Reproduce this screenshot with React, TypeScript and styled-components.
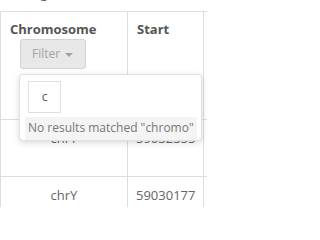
import React from "react";
import styled, { createGlobalStyle } from "styled-components";

const Global = createGlobalStyle`
  html, body { margin: 0; padding: 0; overflow: hidden; background: #fff; }
  body { font-family: "Open Sans", "Liberation Sans", sans-serif; font-size: 13px; line-height: 20px; color: #666; }
`;

const Page = styled.div`
  position: relative;
  width: 207px;
  height: 207px;
  overflow: hidden;
`;

const Info = styled.div`
  margin-top: -17px;
  margin-left: -4px;
  height: 20px;
  margin-bottom: 8px;
  white-space: nowrap;
  color: #555;
`;

const Table = styled.table`
  border-collapse: collapse;
  table-layout: fixed;
  width: 330px;
`;

const Th = styled.th<{ $w: number }>`
  width: ${(p) => p.$w}px;
  border: 1px solid #ddd;
  text-align: left;
  vertical-align: top;
  padding: 7px 9px 0 9px;
  height: 108px;
  box-sizing: border-box;
  font-weight: 700;
  color: #555;
  white-space: nowrap;
`;

const Td = styled.td<{ $h: number }>`
  border: 1px solid #ddd;
  text-align: center;
  vertical-align: top;
  padding: 8px;
  height: ${(p) => p.$h}px;
  box-sizing: border-box;
  color: #666;
`;

const FilterButton = styled.div`
  display: inline-flex;
  align-items: center;
  gap: 5px;
  margin-left: 10px;
  height: 30px;
  width: 66px;
  box-sizing: border-box;
  padding: 0 0 0 11px;
  background: #e8e8e8;
  border: 1px solid #d3d3d3;
  border-radius: 3px;
  color: #a3a3a3;
  font-weight: 400;
  font-size: 12px;
`;

const Caret = styled.span`
  width: 0;
  height: 0;
  border-left: 4px solid transparent;
  border-right: 4px solid transparent;
  border-top: 4px solid #a3a3a3;
  margin-top: 1px;
`;

const Menu = styled.div`
  position: absolute;
  left: 19px;
  top: 74px;
  width: 183px;
  height: 67px;
  box-sizing: border-box;
  background: #fff;
  border: 1px solid rgba(0, 0, 0, 0.12);
  border-radius: 4px;
  box-shadow: 0 2px 6px rgba(0, 0, 0, 0.15);
  padding: 6px 4px 0 5px;
  overflow: hidden;
  display: flex;
  flex-direction: column;
  gap: 4px;
`;

const SearchBox = styled.div`
  margin-left: 3px;
  width: 33px;
  height: 33px;
  box-sizing: border-box;
  border: 1px solid #e0e0e0;
  display: flex;
  align-items: center;
  justify-content: center;
  color: #555;
  font-size: 12px;
`;

const NoResults = styled.div`
  background: #f4f4f4;
  padding: 1px 3px;
  color: #777;
  white-space: nowrap;
  font-size: 12px;
  height: 21px;
`;

export default function App() {
  return (
    <Page>
      <Global />
      <Info>Showing 1 to 10 of 120,577 entries</Info>
      <Table>
        <thead>
          <tr>
            <Th $w={127}>
              Chromosome
              <div>
                <FilterButton>
                  Filter <Caret />
                </FilterButton>
              </div>
            </Th>
            <Th $w={76}>Start</Th>
            <Th $w={127}>End</Th>
          </tr>
        </thead>
        <tbody>
          <tr>
            <Td $h={57}>chrY</Td>
            <Td $h={57}>59032555</Td>
            <Td $h={57}>59032700</Td>
          </tr>
          <tr>
            <Td $h={57}>chrY</Td>
            <Td $h={57}>59030177</Td>
            <Td $h={57}>59030300</Td>
          </tr>
        </tbody>
      </Table>
      <Menu>
        <SearchBox>c</SearchBox>
        <NoResults>No results matched "chromo"</NoResults>
      </Menu>
    </Page>
  );
}
